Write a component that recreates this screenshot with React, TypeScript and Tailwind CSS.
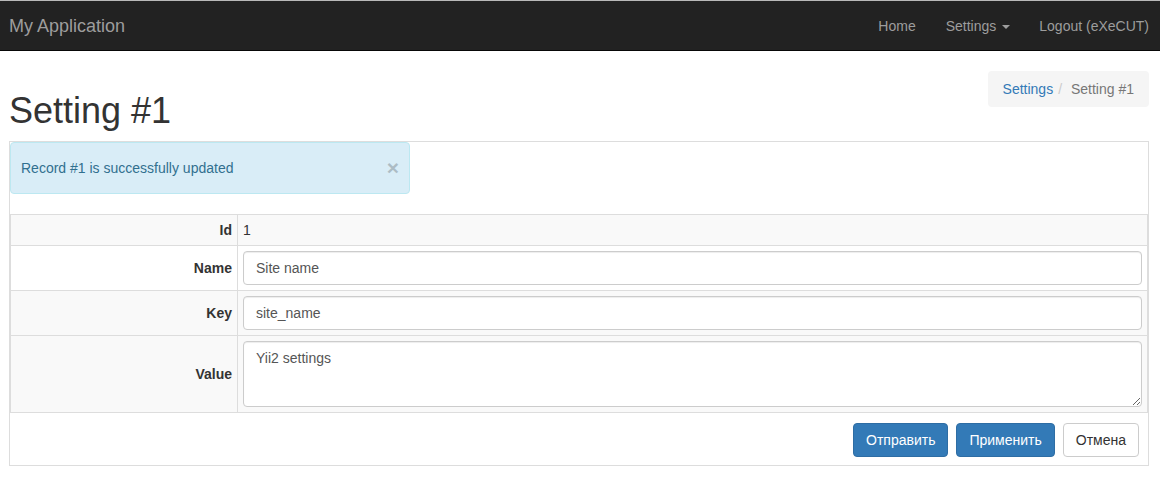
import React from 'react';

const font = "font-['Liberation_Sans',Arial,sans-serif]";

function Navbar() {
  return (
    <div className="flex h-[51px] items-stretch justify-between border-t border-b border-t-[#b9b9b9] border-b-[#080808] bg-[#222]">
      <a className="flex items-center pl-[9px] text-[18px] leading-5 text-[#9d9d9d]">My Application</a>
      <ul className="flex items-stretch pr-[11px] text-[14px] leading-5 text-[#9d9d9d]">
        <li className="flex items-center px-[15px]">Home</li>
        <li className="flex items-center pl-[15px] pr-[14px]">
          Settings
          <span className="ml-[6px] mt-[2px] h-0 w-0 border-x-[4px] border-t-[4px] border-x-transparent border-t-[#9d9d9d]" />
        </li>
        <li className="flex items-center pl-[15px]">Logout (eXeCUT)</li>
      </ul>
    </div>
  );
}

function Field({ value }: { value: string }) {
  return (
    <input
      readOnly
      value={value}
      className="block h-[34px] w-full rounded-[4px] border border-[#ccc] bg-white px-[12px] py-[6px] text-[14px] leading-5 text-[#555] shadow-[inset_0_1px_1px_rgba(0,0,0,0.075)] outline-none"
    />
  );
}

export default function App() {
  const rows: { label: string; bg: string; content: React.ReactNode }[] = [
    { label: 'Id', bg: 'bg-[#f9f9f9]', content: <span className="text-[#333]">1</span> },
    { label: 'Name', bg: 'bg-white', content: <Field value="Site name" /> },
    { label: 'Key', bg: 'bg-[#f9f9f9]', content: <Field value="site_name" /> },
    {
      label: 'Value',
      bg: 'bg-[#f9f9f9]',
      content: (
        <textarea
          readOnly
          value="Yii2 settings"
          className="block h-[66px] w-full resize-y rounded-[4px] border border-[#ccc] bg-white px-[12px] py-[6px] text-[14px] leading-5 text-[#555] shadow-[inset_0_1px_1px_rgba(0,0,0,0.075)] outline-none"
        />
      ),
    },
  ];

  return (
    <div className={`min-h-[489px] bg-white text-[14px] leading-5 text-[#333] ${font}`}>
      <Navbar />
      <div className="pl-[9px] pr-[11px] pt-[20px]">
        <div className="mb-[10px] flex items-start justify-between">
          <h1 className="mt-[20px] text-[36px] font-normal leading-[40px] text-[#333]">Setting #1</h1>
          <ol className="flex rounded-[4px] bg-[#f5f5f5] px-[15px] py-[8px]">
            <li className="text-[#337ab7]">Settings</li>
            <li className="px-[5px] text-[#ccc]">/{'\u00a0'}</li>
            <li className="text-[#777]">Setting #1</li>
          </ol>
        </div>

        <div className="border border-[#ddd]">
          <div className="mb-[20px] flex w-[400px] items-center justify-between rounded-[4px] border border-[#bce8f1] bg-[#d9edf7] py-[15px] pl-[10px] pr-[10px] text-[#31708f]">
            <span>Record #1 is successfully updated</span>
            <span className="text-[21px] font-bold leading-5 text-black opacity-20">×</span>
          </div>

          <table className="w-full border-collapse border border-[#ddd]">
            <tbody>
              {rows.map((r) => (
                <tr key={r.label} className={r.bg}>
                  <th className="w-[227px] border border-[#ddd] p-[5px] text-right align-middle font-bold text-[#333]">
                    {r.label}
                  </th>
                  <td className="border border-[#ddd] p-[5px] align-middle">{r.content}</td>
                </tr>
              ))}
            </tbody>
          </table>

          <div className="flex justify-end gap-2 pb-[8px] pr-[9px] pt-[10px]">
            <button className="h-[34px] rounded-[4px] border border-[#2e6da4] bg-[#337ab7] px-[12px] text-white">Отправить</button>
            <button className="h-[34px] rounded-[4px] border border-[#2e6da4] bg-[#337ab7] px-[12px] text-white">Применить</button>
            <button className="h-[34px] rounded-[4px] border border-[#ccc] bg-white px-[12px] text-[#333]">Отмена</button>
          </div>
        </div>
      </div>
    </div>
  );
}
